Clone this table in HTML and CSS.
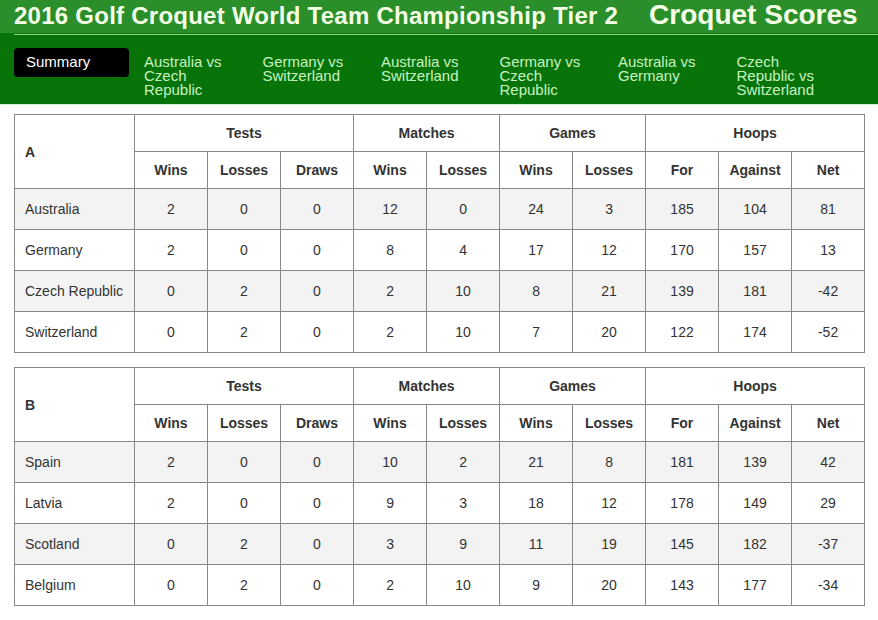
FILE: index.html
```html
<!DOCTYPE html>
<html lang="en">
<head>
<meta charset="utf-8">
<title>Croquet Scores</title>
<link rel="stylesheet" href="styles.css">
</head>
<body>
<header class="site-header">
  <div class="title-bar">
    <h1 class="title">2016 Golf Croquet World Team Championship Tier 2</h1>
    <div class="brand">Croquet Scores</div>
  </div>
  <nav class="nav">
    <div class="nav-rule"></div>
    <div class="nav-items">
      <a class="nav-btn">Summary</a>
      <a class="nav-item">Australia vs Czech Republic</a>
      <a class="nav-item">Germany vs Switzerland</a>
      <a class="nav-item">Australia vs Switzerland</a>
      <a class="nav-item">Germany vs Czech Republic</a>
      <a class="nav-item">Australia vs Germany</a>
      <a class="nav-item">Czech Republic vs Switzerland</a>
    </div>
  </nav>
</header>
<main class="content">
  <table class="scores">
    <colgroup><col class="c-team"><col span="10" class="c-num"></colgroup>
    <thead>
      <tr class="h1"><th rowspan="2" class="grp">A</th><th colspan="3">Tests</th><th colspan="2">Matches</th><th colspan="2">Games</th><th colspan="3">Hoops</th></tr>
      <tr class="h2"><th>Wins</th><th>Losses</th><th>Draws</th><th>Wins</th><th>Losses</th><th>Wins</th><th>Losses</th><th>For</th><th>Against</th><th>Net</th></tr>
    </thead>
    <tbody>
      <tr><td>Australia</td><td>2</td><td>0</td><td>0</td><td>12</td><td>0</td><td>24</td><td>3</td><td>185</td><td>104</td><td>81</td></tr>
      <tr><td>Germany</td><td>2</td><td>0</td><td>0</td><td>8</td><td>4</td><td>17</td><td>12</td><td>170</td><td>157</td><td>13</td></tr>
      <tr><td>Czech Republic</td><td>0</td><td>2</td><td>0</td><td>2</td><td>10</td><td>8</td><td>21</td><td>139</td><td>181</td><td>-42</td></tr>
      <tr><td>Switzerland</td><td>0</td><td>2</td><td>0</td><td>2</td><td>10</td><td>7</td><td>20</td><td>122</td><td>174</td><td>-52</td></tr>
    </tbody>
  </table>
  <table class="scores">
    <colgroup><col class="c-team"><col span="10" class="c-num"></colgroup>
    <thead>
      <tr class="h1"><th rowspan="2" class="grp">B</th><th colspan="3">Tests</th><th colspan="2">Matches</th><th colspan="2">Games</th><th colspan="3">Hoops</th></tr>
      <tr class="h2"><th>Wins</th><th>Losses</th><th>Draws</th><th>Wins</th><th>Losses</th><th>Wins</th><th>Losses</th><th>For</th><th>Against</th><th>Net</th></tr>
    </thead>
    <tbody>
      <tr><td>Spain</td><td>2</td><td>0</td><td>0</td><td>10</td><td>2</td><td>21</td><td>8</td><td>181</td><td>139</td><td>42</td></tr>
      <tr><td>Latvia</td><td>2</td><td>0</td><td>0</td><td>9</td><td>3</td><td>18</td><td>12</td><td>178</td><td>149</td><td>29</td></tr>
      <tr><td>Scotland</td><td>0</td><td>2</td><td>0</td><td>3</td><td>9</td><td>11</td><td>19</td><td>145</td><td>182</td><td>-37</td></tr>
      <tr><td>Belgium</td><td>0</td><td>2</td><td>0</td><td>2</td><td>10</td><td>9</td><td>20</td><td>143</td><td>177</td><td>-34</td></tr>
    </tbody>
  </table>
</main>
</body>
</html>
```
FILE: styles.css
```css
* { box-sizing: border-box; }
html, body { margin: 0; padding: 0; background: #fff; }
body { font-family: "Liberation Sans", Arial, sans-serif; color: #333; }

.title-bar {
  height: 33px;
  background: #2a8f2a;
  display: flex;
  align-items: flex-start;
  padding-left: 14px;
}
.title {
  margin: 0;
  padding-top: 2px;
  font-size: 24px;
  line-height: 28px;
  letter-spacing: 0.25px;
  font-weight: bold;
  color: #f4ffe6;
  white-space: nowrap;
}
.brand {
  margin-left: 31px;
  font-size: 28px;
  line-height: 30px;
  font-weight: bold;
  color: #f4ffe6;
  white-space: nowrap;
}

.nav {
  background: #087308;
  height: 72px;
  padding-top: 1px;
  border-bottom: 1px solid #d4f2d4;
}
.nav-rule {
  margin-left: 14px;
  height: 1px;
  background: #86d886;
}
.nav-items {
  display: flex;
  align-items: flex-start;
  padding-left: 14px;
  padding-top: 13px;
}
.nav-btn {
  width: 115px;
  height: 29px;
  margin-right: 15px;
  background: #000;
  border-radius: 4px;
  color: #fff;
  font-size: 15px;
  padding: 6px 0 0 12px;
  line-height: 16px;
}
.nav-item {
  width: 118.5px;
  padding-right: 27px;
  padding-top: 7px;
  color: #c6f2c0;
  font-size: 15px;
  line-height: 14px;
}

.content { padding: 9px 0 0 14px; }
.scores {
  border-collapse: collapse;
  width: 851px;
  table-layout: fixed;
  margin-bottom: 14px;
  font-size: 14px;
}
.c-team { width: 120px; }
.c-num { width: 73px; }
.scores th, .scores td {
  border: 1px solid #888;
  text-align: center;
  padding: 0;
}
.scores th { font-weight: bold; color: #333; }
.h1 th, .h2 th { height: 37px; }
.scores th.grp { text-align: left; padding-left: 10px; }
.scores td { height: 41px; }
.scores td:first-child { text-align: left; padding-left: 10px; }
.scores tbody tr:nth-child(odd) { background: #f3f3f3; }
```
